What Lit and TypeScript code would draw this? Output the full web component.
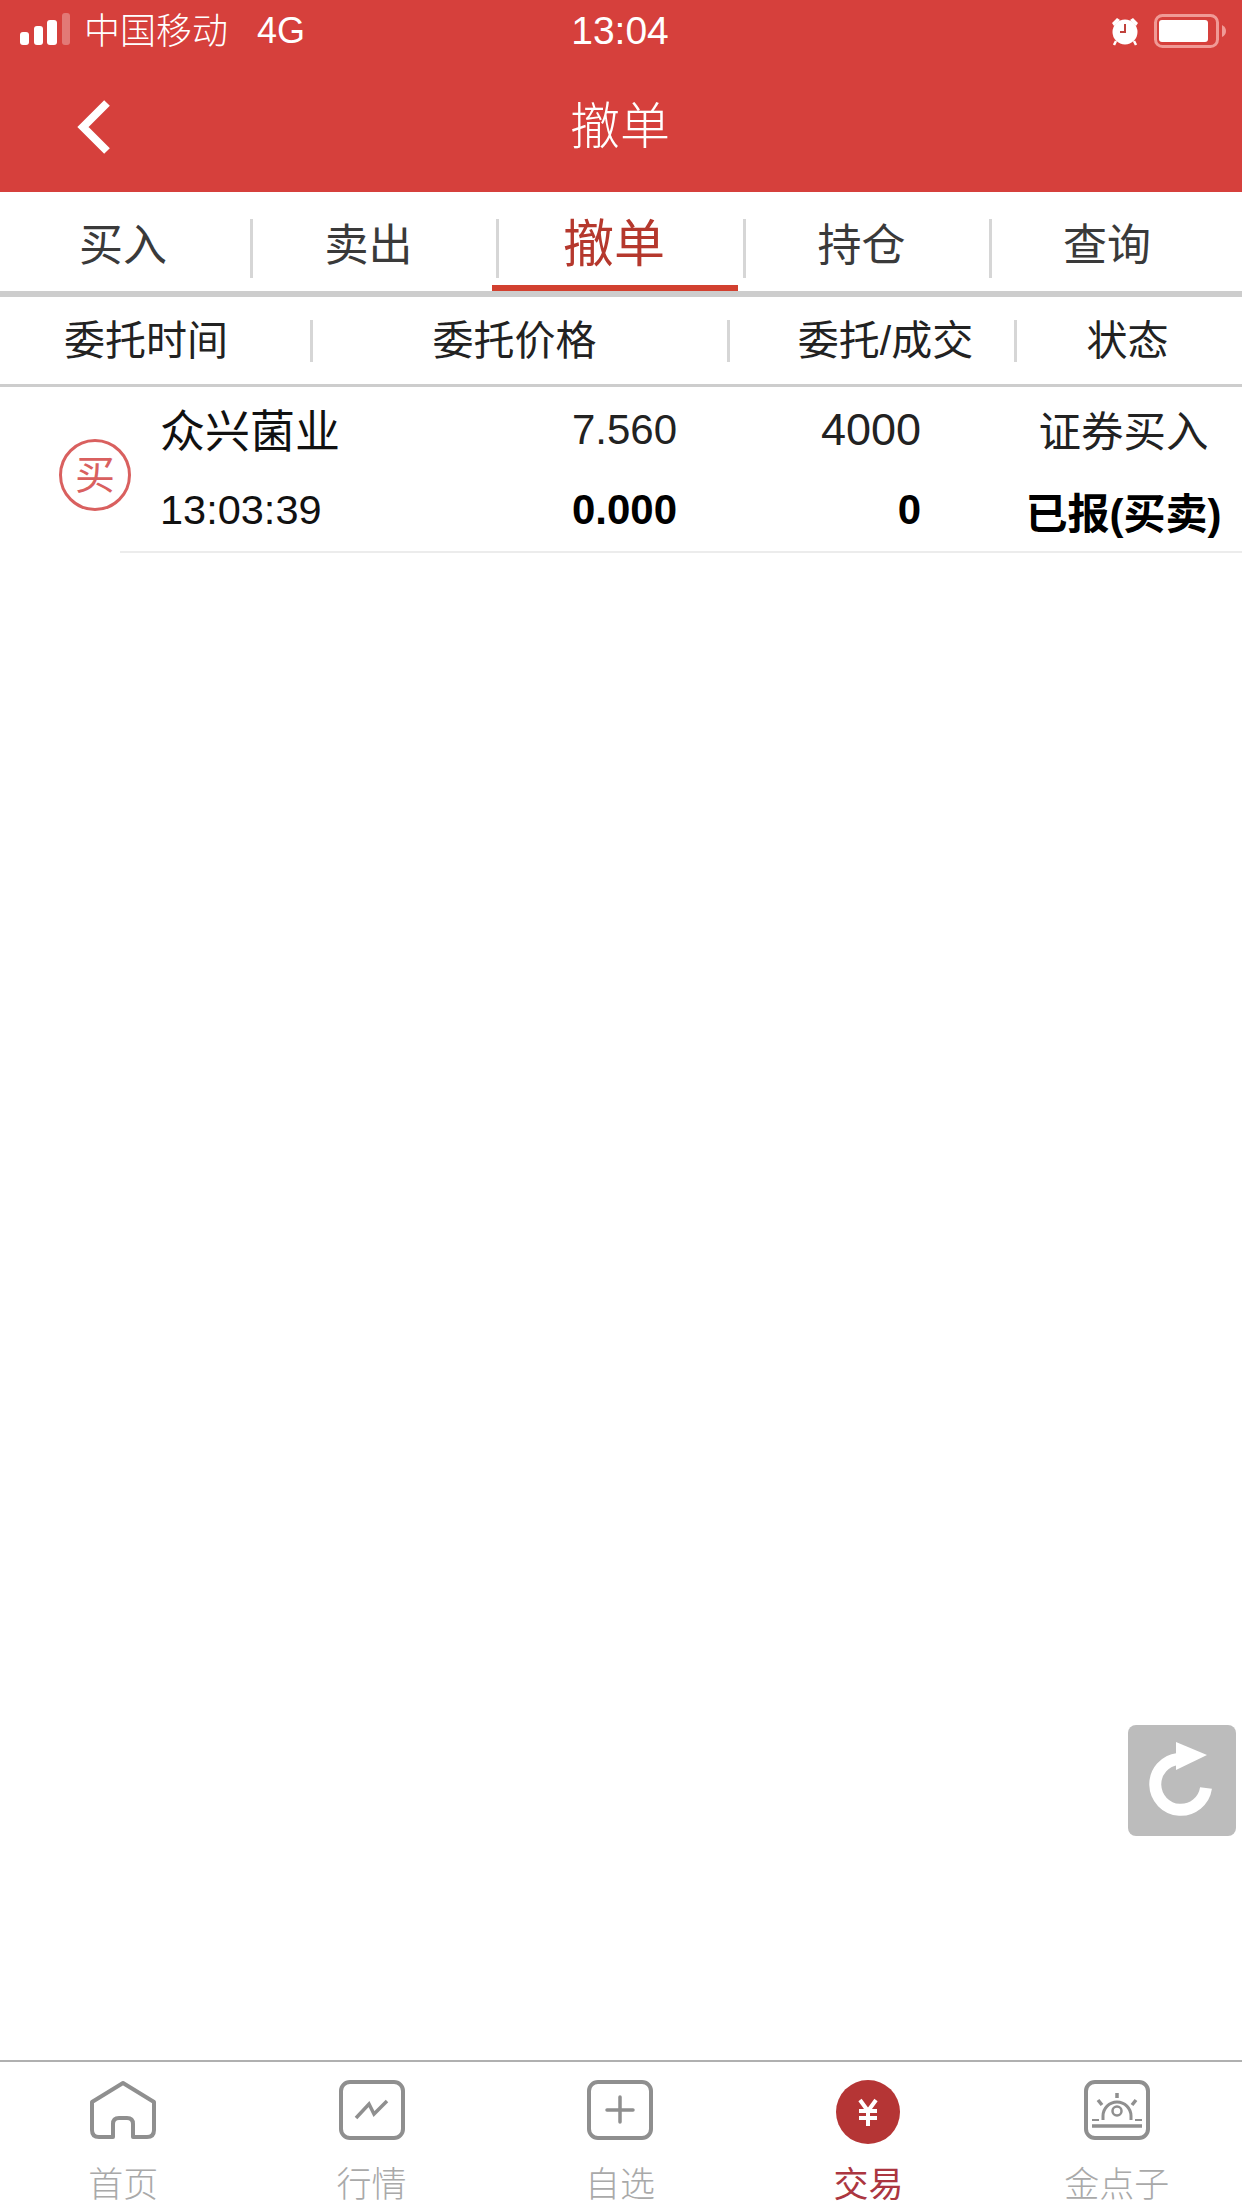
import { LitElement, html, css, svg } from "lit";
import { customElement } from "lit/decorators.js";

const homeIcon = svg`<path d="M33 3 L64 22 V50 Q64 57 57 57 H43 V44 Q43 38 37 38 H29 Q23 38 23 44 V57 H9 Q2 57 2 50 V22 Z" fill="none" stroke="#8f8f8f" stroke-width="4" stroke-linejoin="round"/>`;
const trendIcon = svg`<rect x="2" y="2" width="62" height="56" rx="9" fill="none" stroke="#8f8f8f" stroke-width="4"/><path d="M17 38 L30 24 L35 34 L48 21" fill="none" stroke="#8f8f8f" stroke-width="3.5"/>`;
const plusIcon = svg`<rect x="2" y="2" width="62" height="56" rx="9" fill="none" stroke="#8f8f8f" stroke-width="4"/><path d="M20 30 H46 M33 17 V42" fill="none" stroke="#8f8f8f" stroke-width="3.5" stroke-linecap="round"/>`;
const yenIcon = svg`<circle cx="33" cy="32" r="32" fill="#b53535"/><path d="M25 20 L33 31 L41 20 M33 31 V46 M24 31 H42 M24 38 H42" fill="none" stroke="#fff" stroke-width="4"/>`;
const goldIcon = svg`<rect x="2" y="2" width="62" height="56" rx="9" fill="none" stroke="#8f8f8f" stroke-width="4"/>
  <path d="M19 40 V36 A14 14 0 0 1 47 36 V40" fill="none" stroke="#8f8f8f" stroke-width="3"/>
  <circle cx="33" cy="31" r="4.5" fill="none" stroke="#8f8f8f" stroke-width="2.5"/>
  <path d="M33 13 V18 M14 20 L18 25 M52 20 L48 25" stroke="#8f8f8f" stroke-width="3.5"/>
  <path d="M8 40 H15 M51 40 H58" stroke="#8f8f8f" stroke-width="2"/>
  <path d="M8 46 H58" stroke="#8f8f8f" stroke-width="3.5"/>`;

const navItems = [
  { label: "首页", icon: homeIcon, active: false },
  { label: "行情", icon: trendIcon, active: false },
  { label: "自选", icon: plusIcon, active: false },
  { label: "交易", icon: yenIcon, active: true },
  { label: "金点子", icon: goldIcon, active: false },
];

@customElement("app-root")
export class AppRoot extends LitElement {
  static styles = css`
    :host {
      display: flex;
      flex-direction: column;
      position: relative;
      width: 1242px;
      height: 2208px;
      background: #fff;
      overflow: hidden;
      font-family: "Liberation Sans", "Noto Sans CJK SC", sans-serif;
      color: #111;
    }
    .top { height: 192px; background: #d6403c; color: #fff; display: flex; flex-direction: column; flex: none; }
    .status { height: 62px; display: flex; align-items: center; padding: 0 15px 0 20px; position: relative; }
    .carrier { font-size: 36px; font-weight: 300; margin: 2px 0 0 14px; line-height: 44px; }
    .net { font-size: 36px; margin-left: 29px; font-weight: 300; line-height: 44px; }
    .time { position: absolute; left: 0; right: 2px; top: 9px; text-align: center; font-size: 39px; line-height: 44px; }
    .status-right { margin-left: auto; display: flex; align-items: center; gap: 15px; }
    .title-row { flex: 1; display: flex; align-items: center; padding-left: 74px; position: relative; }
    .title { position: absolute; left: 0; right: 2px; text-align: center; font-size: 50px; font-weight: 300; line-height: 60px; top: 35px; }

    .tabs {
      flex: none;
      display: grid;
      grid-template-columns: 250px 3px 243px 3px 244px 3px 243px 3px 250px;
      height: 105px;
      box-sizing: border-box;
      border-bottom: 6px solid #cdcdcd;
    }
    .tab { display: flex; align-items: center; justify-content: center; font-size: 44px; font-weight: 400; color: #3a3a3a; padding-right: 12px; position: relative; height: 99px; box-sizing: border-box; }
    .tab:first-child { padding-right: 4px; }
    .tab:last-child { padding-right: 20px; }
    .tab.on { color: #b5382d; font-size: 51px; padding-bottom: 4px; padding-right: 14px; }
    .tab.on::after { content: ""; position: absolute; left: -7px; bottom: 0; width: 246px; height: 6px; background: #d2402f; }
    .tsep { width: 3px; height: 59px; margin-top: 27px; background: #d6d6d6; }

    .cols {
      flex: none;
      display: grid;
      grid-template-columns: 310px 3px 414px 3px 284px 3px 225px;
      height: 90px;
      box-sizing: border-box;
      border-bottom: 3px solid #cdcdcd;
      align-items: center;
    }
    .col { text-align: center; font-size: 41px; line-height: 56px; font-weight: 400; color: #222; white-space: nowrap; }
    .c1 { padding-right: 18px; }
    .c2 { padding-right: 11px; }
    .c3 { padding-left: 27px; }
    .c4 { padding-right: 4px; }
    .csep { width: 3px; height: 42px; background: #d6d6d6; }

    .order {
      flex: none;
      display: grid;
      grid-template-columns: 160px 300px 217px 244px 321px;
      grid-template-rows: 86px 74px;
      align-items: center;
      height: 164px;
      font-size: 42px;
    }
    .badge-cell { grid-column: 1; grid-row: 1 / 3; padding: 16px 0 0 59px; }
    .badge { width: 66px; height: 66px; border: 3px solid #d9605f; border-radius: 50%; color: #d9605f; font-size: 40px; font-weight: 400; display: flex; align-items: center; justify-content: center; line-height: 1; }
    .name { font-size: 45px; font-weight: 400; padding-bottom: 3px; }
    .num { text-align: right; color: #222; }
    .qty { font-size: 45px; }
    .stat { text-align: center; padding-left: 84px; white-space: nowrap; color: #222; }
    .stat.first { font-size: 42.5px; padding-bottom: 3px; }
    .bold { font-weight: 700; color: #000; }
    .clock { color: #111; font-size: 41.5px; }
    .rule { flex: none; margin-left: 120px; height: 2px; background: #ececec; }

    .spacer { flex: 1; }

    .nav {
      flex: none;
      display: grid;
      grid-template-columns: repeat(5, 1fr);
      height: 148px;
      box-sizing: border-box;
      border-top: 2px solid #b0b0b0;
      padding-top: 18px;
    }
    .item { display: flex; flex-direction: column; align-items: center; color: #a9a9a9; font-size: 35px; font-weight: 300; line-height: 40px; gap: 21px; padding-right: 2px; }
    .item svg { display: block; }
    .item.on { color: #ab3640; font-weight: 400; }

    .reload { position: absolute; left: 1128px; top: 1725px; width: 108px; height: 111px; border-radius: 8px; background: #bcbcbc; }
    .reload svg { display: block; }
  `;

  render() {
    return html`
      <div class="top">
        <div class="status">
          <svg width="50" height="36" viewBox="0 0 50 36">
            <rect x="0" y="19" width="9" height="13" rx="3" fill="#fff"/>
            <rect x="14" y="13" width="9" height="19" rx="3" fill="#fff"/>
            <rect x="27" y="7" width="10" height="25" rx="3" fill="#fff"/>
            <rect x="42" y="0" width="8" height="32" rx="3" fill="#fff" opacity=".3"/>
          </svg>
          <span class="carrier">中国移动</span>
          <span class="net">4G</span>
          <span class="time">13:04</span>
          <div class="status-right">
            <svg width="28" height="30" viewBox="0 0 28 30">
              <circle cx="14" cy="16" r="12.5" fill="#fff"/>
              <path d="M1 7 L6 2 L9 4 L3 10 Z M27 7 L22 2 L19 4 L25 10 Z" fill="#fff"/>
              <path d="M5 25 L3 29 M23 25 L25 29" stroke="#fff" stroke-width="2.5"/>
              <path d="M14 8 V16 H9" fill="none" stroke="#c0423c" stroke-width="2"/>
            </svg>
            <svg width="73" height="34" viewBox="0 0 73 34">
              <rect x="1.5" y="1.5" width="62" height="31" rx="7" fill="none" stroke="#f09a96" stroke-width="3"/>
              <rect x="5" y="6" width="49" height="22" rx="3" fill="#fff"/>
              <path d="M68 11 Q72 13 72 17 Q72 21 68 23 Z" fill="#f09a96"/>
            </svg>
          </div>
        </div>
        <div class="title-row">
          <svg width="40" height="60" viewBox="0 0 40 60">
            <path d="M33 6 L9 30 L33 54" fill="none" stroke="#fff" stroke-width="8"/>
          </svg>
          <span class="title">撤单</span>
        </div>
      </div>

      <div class="tabs">
        <div class="tab">买入</div><div class="tsep"></div>
        <div class="tab">卖出</div><div class="tsep"></div>
        <div class="tab on">撤单</div><div class="tsep"></div>
        <div class="tab">持仓</div><div class="tsep"></div>
        <div class="tab">查询</div>
      </div>

      <div class="cols">
        <div class="col c1">委托时间</div><div class="csep"></div>
        <div class="col c2">委托价格</div><div class="csep"></div>
        <div class="col c3">委托/成交</div><div class="csep"></div>
        <div class="col c4">状态</div>
      </div>

      <div class="order">
        <div class="badge-cell"><div class="badge">买</div></div>
        <div class="name">众兴菌业</div>
        <div class="num">7.560</div>
        <div class="num qty">4000</div>
        <div class="stat first">证券买入</div>
        <div class="clock">13:03:39</div>
        <div class="num bold">0.000</div>
        <div class="num bold">0</div>
        <div class="stat bold">已报(买卖)</div>
      </div>
      <div class="rule"></div>

      <div class="spacer"></div>

      <div class="nav">
        ${navItems.map(
          (n) => html`
            <div class="item ${n.active ? "on" : ""}">
              <svg width="66" height="64" viewBox="0 0 66 64">${n.icon}</svg>
              <span>${n.label}</span>
            </div>
          `
        )}
      </div>

      <div class="reload">
        <svg width="108" height="111" viewBox="0 0 108 111">
          <path d="M78 63 A25.5 25.5 0 1 1 50 34" fill="none" stroke="#fff" stroke-width="12"/>
          <path d="M48 17 L79 30 L48 45 Z" fill="#fff"/>
        </svg>
      </div>
    `;
  }
}
